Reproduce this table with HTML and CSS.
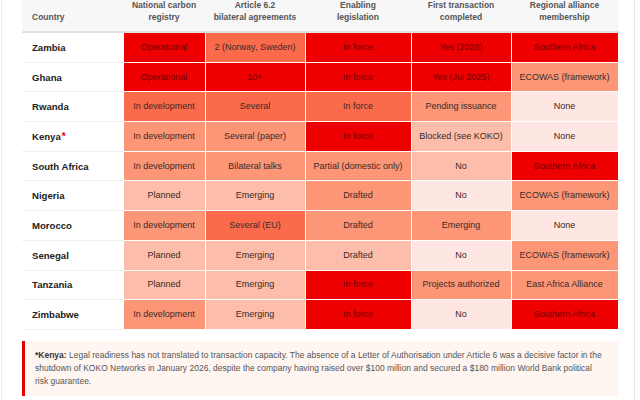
FILE: index.html
```html
<!DOCTYPE html>
<html>
<head>
<meta charset="utf-8">
<link rel="stylesheet" href="styles.css">
</head>
<body>
<div class="page">
  <table class="matrix">
    <colgroup>
      <col class="c-country"><col class="c-reg"><col class="c-art"><col class="c-leg"><col class="c-tx"><col class="c-all">
    </colgroup>
    <thead>
      <tr>
        <th class="left">Country</th>
        <th>National carbon<br>registry</th>
        <th>Article 6.2<br>bilateral agreements</th>
        <th>Enabling<br>legislation</th>
        <th>First transaction<br>completed</th>
        <th>Regional alliance<br>membership</th>
      </tr>
    </thead>
    <tbody>
      <tr><td class="country">Zambia</td><td class="l5">Operational</td><td class="l4">2 (Norway, Sweden)</td><td class="l5">In force</td><td class="l5">Yes (2026)</td><td class="l5">Southern Africa</td></tr>
      <tr><td class="country">Ghana</td><td class="l5">Operational</td><td class="l5">10+</td><td class="l5">In force</td><td class="l5">Yes (Jul 2025)</td><td class="l3">ECOWAS (framework)</td></tr>
      <tr><td class="country">Rwanda</td><td class="l4">In development</td><td class="l4">Several</td><td class="l4">In force</td><td class="l3">Pending issuance</td><td class="l1">None</td></tr>
      <tr><td class="country">Kenya<span class="ast">*</span></td><td class="l3">In development</td><td class="l3">Several (paper)</td><td class="l5">In force</td><td class="l2">Blocked (see KOKO)</td><td class="l1">None</td></tr>
      <tr><td class="country">South Africa</td><td class="l3">In development</td><td class="l3">Bilateral talks</td><td class="l3">Partial (domestic only)</td><td class="l2">No</td><td class="l5">Southern Africa</td></tr>
      <tr><td class="country">Nigeria</td><td class="l2">Planned</td><td class="l2">Emerging</td><td class="l3">Drafted</td><td class="l1">No</td><td class="l3">ECOWAS (framework)</td></tr>
      <tr><td class="country">Morocco</td><td class="l3">In development</td><td class="l4">Several (EU)</td><td class="l3">Drafted</td><td class="l3">Emerging</td><td class="l1">None</td></tr>
      <tr><td class="country">Senegal</td><td class="l2">Planned</td><td class="l2">Emerging</td><td class="l2">Drafted</td><td class="l1">No</td><td class="l3">ECOWAS (framework)</td></tr>
      <tr><td class="country">Tanzania</td><td class="l2">Planned</td><td class="l2">Emerging</td><td class="l5">In force</td><td class="l3">Projects authorized</td><td class="l3">East Africa Alliance</td></tr>
      <tr><td class="country">Zimbabwe</td><td class="l3">In development</td><td class="l2">Emerging</td><td class="l5">In force</td><td class="l1">No</td><td class="l5">Southern Africa</td></tr>
    </tbody>
  </table>
  <div class="note">
    <p><strong>*Kenya:</strong> Legal readiness has not translated to transaction capacity. The absence of a Letter of Authorisation under Article 6 was a decisive factor in the shutdown of KOKO Networks in January 2026, despite the company having raised over $100 million and secured a $180 million World Bank political risk guarantee.</p>
  </div>
</div>
</body>
</html>
```
FILE: styles.css
```css
html, body {
  margin: 0;
  padding: 0;
  background: #fff;
}
body {
  font-family: "Liberation Sans", Arial, sans-serif;
  color: #333;
}
.page {
  margin-left: 1px;
  width: 634px;
  height: 400px;
  box-sizing: border-box;
  border-left: 1px solid #efefef;
  border-right: 1px solid #e6e6e6;
  padding: 0 17px 0 20px;
  overflow: hidden;
}
.matrix {
  width: 596px;
  border-collapse: collapse;
  table-layout: fixed;
}
.c-country { width: 101px; }
.c-reg { width: 82px; }
.c-art { width: 100px; }
.c-leg { width: 106px; }
.c-tx { width: 100px; }
.c-all { width: 107px; }

.matrix th {
  background: #f7f7f7;
  color: #555;
  font-size: 8.5px;
  font-weight: bold;
  line-height: 11.5px;
  text-align: center;
  vertical-align: bottom;
  padding: 0 4px 8px;
  border-bottom: 2px solid #e2e2e2;
}
.matrix th.left {
  text-align: left;
  padding-left: 10px;
}
.matrix td {
  height: 28.7px;
  padding: 0 2px;
  font-size: 9px;
  line-height: 11px;
  text-align: center;
  vertical-align: middle;
  border: 1px solid #fff;
  color: #3a2a26;
  white-space: nowrap;
}
.matrix td.country {
  text-align: left;
  padding-left: 10px;
  font-size: 9.6px;
  font-weight: bold;
  color: #222;
  background: #fff;
  border-left: none;
  border-top: 1px solid #efefef;
  border-bottom: 1px solid #efefef;
}
.ast {
  color: #e00000;
  font-size: 10px;
  margin-left: 1px;
}
.l1 { background: #fee6e2; }
.l2 { background: #fcbeaa; }
.l3 { background: #fc9677; }
.l4 { background: #fb6a4a; }
.l5 { background: #ee0000; color: #6e0000 !important; }

.note {
  margin-top: 11px;
  width: 596px;
  box-sizing: border-box;
  background: #fff6f2;
  border-left: 3px solid #e00000;
  padding: 8px 16px 8px 10px;
}
.note p {
  margin: 0;
  font-size: 8.5px;
  line-height: 13px;
  color: #555;
}
.note strong {
  color: #333;
}
```
